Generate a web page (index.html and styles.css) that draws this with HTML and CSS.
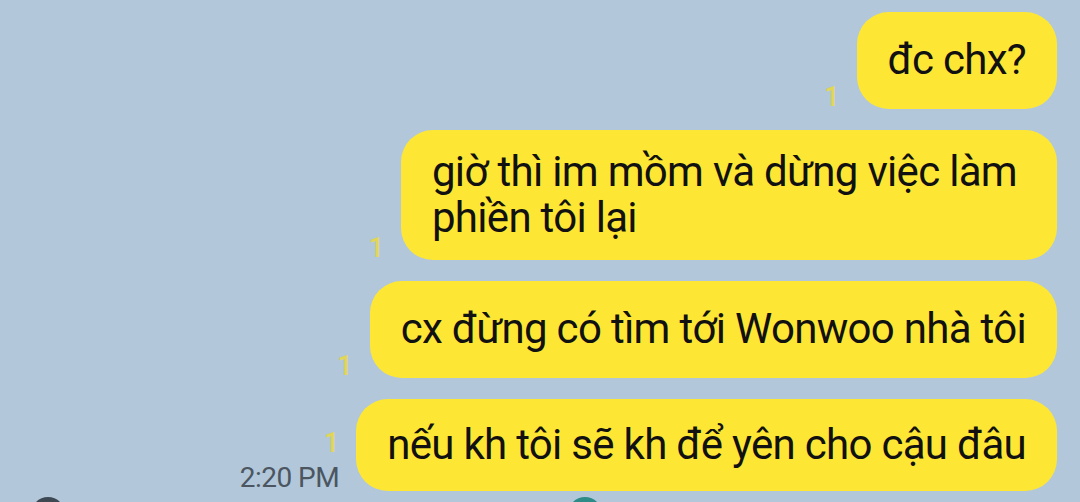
FILE: index.html
```html
<!DOCTYPE html>
<html lang="vi">
<head>
    <meta charset="UTF-8">
    <meta name="viewport" content="width=device-width, initial-scale=1.0">
    <title>Chat</title>
    <link rel="stylesheet" href="styles.css">
</head>
<body>
    <div class="chat">
        <div class="row">
            <div class="meta"><span class="unread">1</span></div>
            <div class="bubble">đc chx?</div>
        </div>
        <div class="row">
            <div class="meta"><span class="unread">1</span></div>
            <div class="bubble multi">giờ thì im mồm và dừng việc làm<br>phiền tôi lại</div>
        </div>
        <div class="row">
            <div class="meta"><span class="unread">1</span></div>
            <div class="bubble">cx đừng có tìm tới Wonwoo nhà tôi</div>
        </div>
        <div class="row">
            <div class="meta">
                <span class="unread">1</span>
                <span class="time">2:20 PM</span>
            </div>
            <div class="bubble last">nếu kh tôi sẽ kh để yên cho cậu đâu</div>
        </div>
        <div class="peek">
            <span class="dot dark"></span>
            <span class="dot teal"></span>
        </div>
    </div>
</body>
</html>
```

FILE: styles.css
```css
html, body {
    margin: 0;
    height: 100%;
}

body {
    background-color: #b2c7da;
    font-family: Roboto, "Noto Sans", sans-serif;
    overflow: hidden;
}

.chat {
    display: flex;
    flex-direction: column;
    gap: 21px;
    padding: 12px 23px 0 0;
}

.row {
    display: flex;
    justify-content: flex-end;
    align-items: flex-end;
    gap: 17px;
}

.meta {
    display: flex;
    flex-direction: column;
    align-items: flex-end;
}

.unread {
    color: #e2d657;
    font-size: 27px;
    font-weight: 500;
    line-height: 24px;
}

.time {
    color: #4b5661;
    font-size: 28px;
    line-height: 26px;
    margin-top: 10px;
    letter-spacing: -0.5px;
}

.bubble {
    background-color: #fee734;
    color: #111;
    font-size: 42px;
    line-height: 46px;
    padding: 25px 31px 26px;
    border-radius: 32px;
    letter-spacing: -0.7px;
}

.bubble.multi {
    padding: 19px 40px 19px 31px;
}

.bubble.last {
    padding: 23px 31px;
}

.peek {
    position: relative;
    height: 5px;
    margin-top: -15px;
    overflow: hidden;
}

.dot {
    position: absolute;
    top: 0;
    width: 34px;
    height: 34px;
    border-radius: 50%;
}

.dot.dark {
    left: 31px;
    background-color: #3d4853;
}

.dot.teal {
    left: 568px;
    background-color: #2e8c88;
}
```
